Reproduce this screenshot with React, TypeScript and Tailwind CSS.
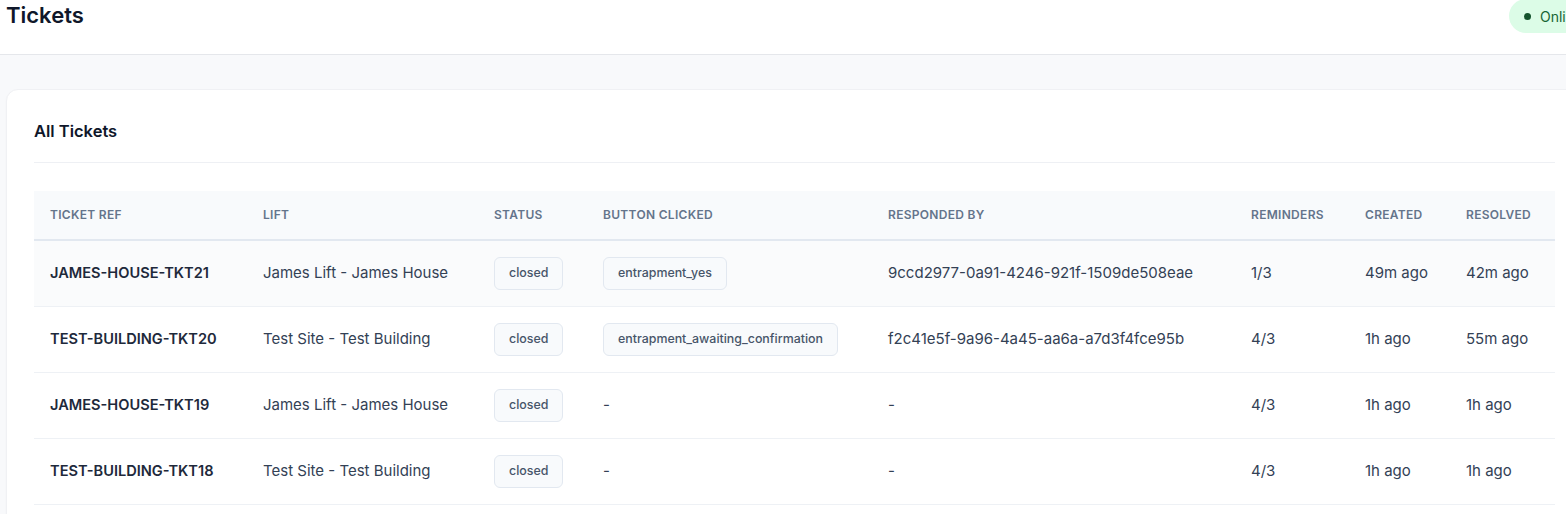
import React from "react";

type Ticket = {
  ref: string;
  lift: string;
  status: string;
  button: string | null;
  respondedBy: string | null;
  reminders: string;
  created: string;
  resolved: string;
};

const tickets: Ticket[] = [
  {
    ref: "JAMES-HOUSE-TKT21",
    lift: "James Lift - James House",
    status: "closed",
    button: "entrapment_yes",
    respondedBy: "9ccd2977-0a91-4246-921f-1509de508eae",
    reminders: "1/3",
    created: "49m ago",
    resolved: "42m ago",
  },
  {
    ref: "TEST-BUILDING-TKT20",
    lift: "Test Site - Test Building",
    status: "closed",
    button: "entrapment_awaiting_confirmation",
    respondedBy: "f2c41e5f-9a96-4a45-aa6a-a7d3f4fce95b",
    reminders: "4/3",
    created: "1h ago",
    resolved: "55m ago",
  },
  {
    ref: "JAMES-HOUSE-TKT19",
    lift: "James Lift - James House",
    status: "closed",
    button: null,
    respondedBy: null,
    reminders: "4/3",
    created: "1h ago",
    resolved: "1h ago",
  },
  {
    ref: "TEST-BUILDING-TKT18",
    lift: "Test Site - Test Building",
    status: "closed",
    button: null,
    respondedBy: null,
    reminders: "4/3",
    created: "1h ago",
    resolved: "1h ago",
  },
];

const columns = [
  "Ticket Ref",
  "Lift",
  "Status",
  "Button Clicked",
  "Responded By",
  "Reminders",
  "Created",
  "Resolved",
];

const gridCols =
  "grid grid-cols-[213px_231px_109px_285px_363px_114px_101px_105px] items-center";

const Badge = ({ children }: { children: React.ReactNode }) => (
  <span className="inline-flex h-[33px] items-center rounded-md border border-[#e2e8f0] bg-[#f8fafc] px-[14px] text-[12.4px] font-medium text-[#475569]">
    {children}
  </span>
);

export default function App() {
  return (
    <div
      className="h-screen w-screen overflow-hidden bg-[#f8f9fb]"
      style={{ fontFamily: "Inter, 'Noto Sans', sans-serif" }}
    >
      <div className="w-[1589px]">
        {/* Header */}
        <header className="flex h-[55px] items-start justify-between border-b border-[#e5e7eb] bg-white px-[6px]">
          <h1 className="-mt-[1px] text-[22px] leading-8 font-semibold text-[#0f172a]">
            Tickets
          </h1>
          <div className="-mt-[1px] flex h-[34px] w-[74px] items-center gap-[9px] rounded-l-full bg-[#dcfce7] pl-[15px] text-[14px] text-[#166534]">
            <span className="h-[7px] w-[7px] shrink-0 rounded-full bg-[#14532d]" />
            <span>Online</span>
          </div>
        </header>

        {/* Main */}
        <main className="px-[6px] pt-[34px]">
          <div className="rounded-xl border border-[#f0f1f4] bg-white px-[27px] pt-[27px] pb-[28px] shadow-[0_1px_2px_rgba(0,0,0,0.03)]">
            <div className="border-b border-[#eef0f4] pb-[17px]">
              <h2 className="text-[16.5px] leading-7 font-semibold text-[#0f172a]">
                All Tickets
              </h2>
            </div>

            {/* Table */}
            <div className="mt-[28px]">
              <div
                className={`${gridCols} h-[50px] border-b-2 border-[#e2e8f0] bg-[#f8fafc]`}
              >
                {columns.map((c) => (
                  <div
                    key={c}
                    className="px-4 text-xs font-semibold tracking-wide text-[#64748b] uppercase"
                  >
                    {c}
                  </div>
                ))}
              </div>

              {tickets.map((t, i) => (
                <div
                  key={t.ref}
                  className={`${gridCols} h-[66px] border-b border-[#eef1f5] text-[15px] text-[#334155] ${
                    i === 0 ? "bg-[#fafbfc]" : "bg-white"
                  }`}
                >
                  <div className="px-4 text-[14.6px] font-semibold text-[#1e293b]">
                    {t.ref}
                  </div>
                  <div className="px-4">{t.lift}</div>
                  <div className="px-4">
                    <Badge>{t.status}</Badge>
                  </div>
                  <div className="px-4">
                    {t.button ? <Badge>{t.button}</Badge> : "-"}
                  </div>
                  <div className="px-4">{t.respondedBy ?? "-"}</div>
                  <div className="px-4">{t.reminders}</div>
                  <div className="px-4">{t.created}</div>
                  <div className="px-4">{t.resolved}</div>
                </div>
              ))}
            </div>
          </div>
        </main>
      </div>
    </div>
  );
}
